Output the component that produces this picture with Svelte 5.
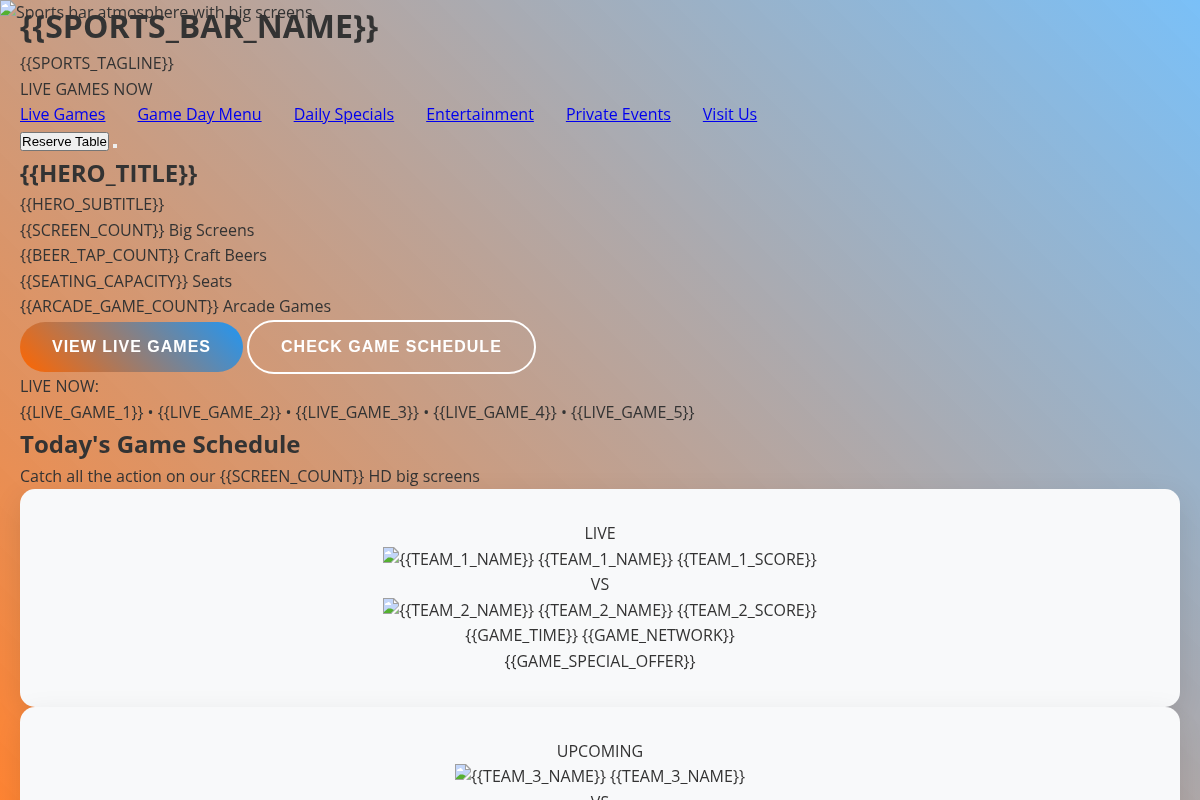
<script>
  const links = [
    'Live Games',
    'Game Day Menu',
    'Daily Specials',
    'Entertainment',
    'Private Events',
    'Visit Us',
  ];

  const stats = [
    '{{SCREEN_COUNT}} Big Screens',
    '{{BEER_TAP_COUNT}} Craft Beers',
    '{{SEATING_CAPACITY}} Seats',
    '{{ARCADE_GAME_COUNT}} Arcade Games',
  ];

  const ticker = [1, 2, 3, 4, 5].map((n) => `{{LIVE_GAME_${n}}}`).join(' • ');

  const games = [
    {
      status: 'LIVE',
      teams: [
        { name: '{{TEAM_1_NAME}}', score: '{{TEAM_1_SCORE}}' },
        { name: '{{TEAM_2_NAME}}', score: '{{TEAM_2_SCORE}}' },
      ],
      details: ['{{GAME_TIME}} {{GAME_NETWORK}}', '{{GAME_SPECIAL_OFFER}}'],
    },
    {
      status: 'UPCOMING',
      teams: [
        { name: '{{TEAM_3_NAME}}', score: '' },
        { name: '{{TEAM_4_NAME}}', score: '' },
      ],
      details: [],
    },
  ];

  const slug = (text) => '#' + text.toLowerCase().replaceAll(' ', '-');
</script>

{#snippet missingImage(alt)}
  <span class="picture"><svg class="picture-icon" viewBox="0 0 16 16" width="16" height="16" aria-hidden="true">
      <path d="M0 0H11L16 5V8L8 16H0Z" fill="#a0a0a0" />
      <path d="M1 1H10V6H15V8L8 15H1Z" fill="#c3d6f9" />
      <path d="M2 7V6L3 5H4L5 4H6L7 5L8 6V7Z" fill="#fff" />
      <path d="M11 2V5H14Z" fill="#fff" />
      <path d="M1 15V14L5 10.500H8L11 12L8 15Z" fill="#55b030" />
      <path d="M0 15H9L8 16H0Z" fill="#a0a0a0" />
      <path d="M16 11V16H11Z" fill="#a0a0a0" />
      <path d="M15 12.500V15H12.500Z" fill="#7fc565" />
    </svg>{alt}</span>
{/snippet}

<div class="backdrop">
  {@render missingImage('Sports bar atmosphere with big screens')}
</div>

<div class="container">
  <header>
    <h1>{'{{SPORTS_BAR_NAME}}'}</h1>
    <p>{'{{SPORTS_TAGLINE}}'}</p>
    <p>LIVE GAMES NOW</p>
    <nav>
      {#each links as link}
        <a href={slug(link)}>{link}</a>
      {/each}
    </nav>
    <div>
      <button type="button" class="small">Reserve Table</button>
      <button type="button" class="small" aria-label="Menu"></button>
    </div>
  </header>

  <section>
    <h2>{'{{HERO_TITLE}}'}</h2>
    <p>{'{{HERO_SUBTITLE}}'}</p>
    {#each stats as stat}
      <p>{stat}</p>
    {/each}
    <div class="actions">
      <button type="button" class="cta primary">View Live Games</button>
      <button type="button" class="cta outline">Check Game Schedule</button>
    </div>
    <p>LIVE NOW:</p>
    <p>{ticker}</p>
  </section>

  <section>
    <h2>Today's Game Schedule</h2>
    <p>Catch all the action on our {'{{SCREEN_COUNT}}'} HD big screens</p>
    {#each games as game}
      <article>
        <p>{game.status}</p>
        {#each game.teams as team, i}
          {#if i > 0}<p>VS</p>{/if}
          <p>{@render missingImage(team.name)} {team.name} {team.score}</p>
        {/each}
        {#each game.details as detail}
          <p>{detail}</p>
        {/each}
      </article>
    {/each}
  </section>
</div>

<style>
  :global(body) {
    margin: 0;
    background: #fff;
    color: #333;
    font-family: 'Open Sans', sans-serif;
    font-size: 16px;
    line-height: 1.6;
  }

  h1,
  h2,
  p {
    margin: 0;
  }

  h1 {
    font-size: 32px;
  }

  h2 {
    font-size: 24px;
  }

  .backdrop {
    position: fixed;
    inset: 0;
    background: linear-gradient(45deg, rgba(255, 102, 0, 0.8), rgba(33, 150, 243, 0.6));
  }

  .container {
    position: relative;
    max-width: 1200px;
    margin: 0 auto;
    padding: 0 20px;
    box-sizing: border-box;
  }

  .picture {
    display: inline-block;
    vertical-align: bottom;
  }

  .picture-icon {
    vertical-align: top;
  }

  nav {
    display: flex;
    gap: 32px;
  }

  a {
    color: #0000ee;
  }

  .small {
    padding: 0;
    font-family: Arial, 'Liberation Sans', sans-serif;
  }

  .actions {
    display: flex;
    align-items: center;
    gap: 4px;
  }

  .cta {
    padding: 16px 32px;
    border: 0;
    border-radius: 30px;
    color: #fff;
    font: bold 16px Arial, 'Liberation Sans', sans-serif;
    letter-spacing: 1px;
    text-transform: uppercase;
    cursor: pointer;
  }

  .primary {
    background: linear-gradient(45deg, #ff6600, #2196f3);
  }

  .outline {
    border: 2px solid #fff;
    background: transparent;
  }

  article {
    padding: 32px;
    border-radius: 15px;
    background: #f8f9fa;
    box-shadow: 0 10px 30px rgba(0, 0, 0, 0.1);
    text-align: center;
  }
</style>
